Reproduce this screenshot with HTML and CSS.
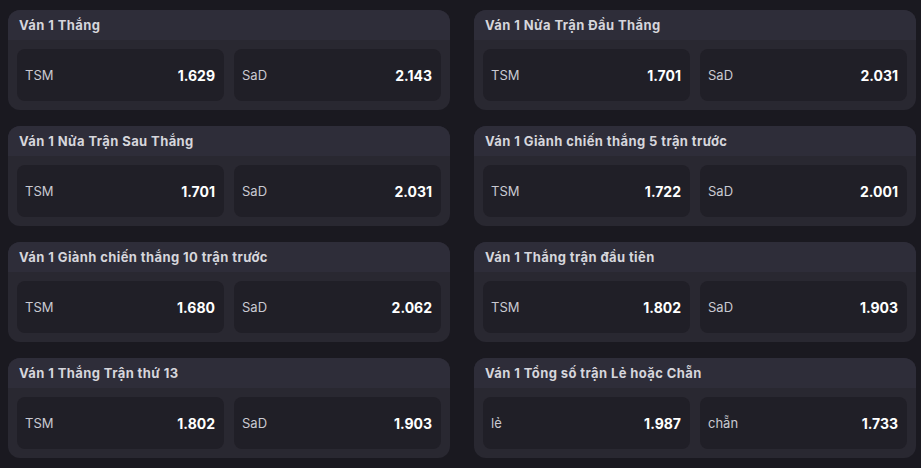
FILE: index.html
```html
<!DOCTYPE html>
<html lang="vi">
<head>
  <meta charset="UTF-8">
  <meta name="viewport" content="width=device-width, initial-scale=1.0">
  <title>Kèo Ván 1</title>
  <link rel="stylesheet" href="styles.css">
</head>
<body>
  <div class="market-grid">
    <div class="market">
      <div class="market-title">Ván 1 Thắng</div>
      <div class="market-odds">
        <div class="odd"><span class="odd-name">TSM</span><span class="odd-value">1.629</span></div>
        <div class="odd"><span class="odd-name">SaD</span><span class="odd-value">2.143</span></div>
      </div>
    </div>
    <div class="market">
      <div class="market-title">Ván 1 Nửa Trận Đầu Thắng</div>
      <div class="market-odds">
        <div class="odd"><span class="odd-name">TSM</span><span class="odd-value">1.701</span></div>
        <div class="odd"><span class="odd-name">SaD</span><span class="odd-value">2.031</span></div>
      </div>
    </div>
    <div class="market">
      <div class="market-title">Ván 1 Nửa Trận Sau Thắng</div>
      <div class="market-odds">
        <div class="odd"><span class="odd-name">TSM</span><span class="odd-value">1.701</span></div>
        <div class="odd"><span class="odd-name">SaD</span><span class="odd-value">2.031</span></div>
      </div>
    </div>
    <div class="market">
      <div class="market-title">Ván 1 Giành chiến thắng 5 trận trước</div>
      <div class="market-odds">
        <div class="odd"><span class="odd-name">TSM</span><span class="odd-value">1.722</span></div>
        <div class="odd"><span class="odd-name">SaD</span><span class="odd-value">2.001</span></div>
      </div>
    </div>
    <div class="market">
      <div class="market-title">Ván 1 Giành chiến thắng 10 trận trước</div>
      <div class="market-odds">
        <div class="odd"><span class="odd-name">TSM</span><span class="odd-value">1.680</span></div>
        <div class="odd"><span class="odd-name">SaD</span><span class="odd-value">2.062</span></div>
      </div>
    </div>
    <div class="market">
      <div class="market-title">Ván 1 Thắng trận đầu tiên</div>
      <div class="market-odds">
        <div class="odd"><span class="odd-name">TSM</span><span class="odd-value">1.802</span></div>
        <div class="odd"><span class="odd-name">SaD</span><span class="odd-value">1.903</span></div>
      </div>
    </div>
    <div class="market">
      <div class="market-title">Ván 1 Thắng Trận thứ 13</div>
      <div class="market-odds">
        <div class="odd"><span class="odd-name">TSM</span><span class="odd-value">1.802</span></div>
        <div class="odd"><span class="odd-name">SaD</span><span class="odd-value">1.903</span></div>
      </div>
    </div>
    <div class="market">
      <div class="market-title">Ván 1 Tổng số trận Lẻ hoặc Chẵn</div>
      <div class="market-odds">
        <div class="odd"><span class="odd-name">lẻ</span><span class="odd-value">1.987</span></div>
        <div class="odd"><span class="odd-name">chẵn</span><span class="odd-value">1.733</span></div>
      </div>
    </div>
  </div>
</body>
</html>
```

FILE: styles.css
```css
body {
  margin: 0;
  background-color: #1a1920;
  font-family: Inter, "Noto Sans", sans-serif;
}
.market-grid {
  display: grid;
  grid-template-columns: 442px 442px;
  column-gap: 24px;
  row-gap: 16px;
  padding: 10px 0 0 8px;
}
.market {
  height: 100px;
  border-radius: 12px;
  background-color: #292831;
  overflow: hidden;
}
.market-title {
  height: 30px;
  line-height: 30px;
  padding-left: 11px;
  background-color: #2e2d39;
  color: #d6d6dc;
  font-size: 13px;
  font-weight: 700;
  letter-spacing: 0.4px;
}
.market-odds {
  display: flex;
  gap: 10px;
  padding: 9px 9px 0 9px;
}
.odd {
  flex: 1;
  height: 52px;
  display: flex;
  justify-content: space-between;
  align-items: center;
  padding: 0 9px 0 8px;
  border-radius: 8px;
  background-color: #201f27;
}
.odd-name {
  color: #c9c9d1;
  font-size: 13px;
}
.odd-value {
  color: #ffffff;
  font-size: 14px;
  font-weight: 700;
}
```
